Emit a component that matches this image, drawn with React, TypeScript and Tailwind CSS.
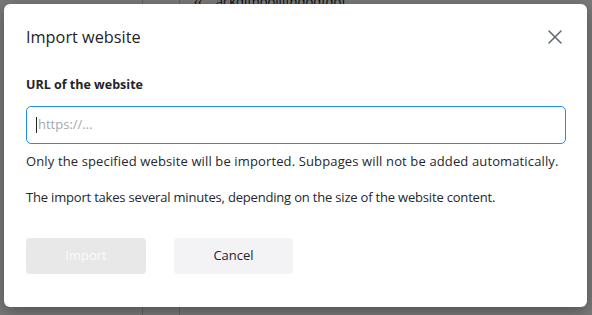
import React from "react";

export default function App() {
  return (
    <div
      className="relative w-[592px] h-[315px] overflow-hidden bg-white"
      style={{ fontFamily: '"Open Sans", "Noto Sans", sans-serif' }}
    >
      {/* background page */}
      <div className="flex h-full">
        <div className="w-[143px] border-r border-[#cfcfcf]" />
        <div className="w-[37px] border-r border-[#cfcfcf]" />
        <div className="flex-1 pl-[14px]">
          <div className="-mt-[8px] text-[13px] text-[#111] flex gap-[14px]">
            <span>‹‹</span>
            <span>ackdifhoollifhdodfdof</span>
          </div>
        </div>
      </div>
      {/* overlay */}
      <div className="absolute inset-0 bg-[rgba(0,0,0,0.52)]" />
      {/* modal */}
      <div className="absolute left-[4px] top-[4px] w-[583px] h-[303px] bg-white rounded-[6px] shadow-[0_4px_16px_rgba(0,0,0,0.35)] px-[22px] pt-[20px]">
        <div className="flex items-center justify-between h-[26px]">
          <h2 className="text-[16.3px] text-[#1f2329] leading-[26px]">Import website</h2>
          <button className="mr-[3px] text-[#5f6670]">
            <svg width="14" height="14" viewBox="0 0 14 14" fill="none" stroke="currentColor" strokeWidth="1.5" strokeLinecap="round">
              <path d="M1 1 L13 13 M13 1 L1 13" />
            </svg>
          </button>
        </div>
        <div className="mt-[26px] text-[12.5px] font-bold text-[#1f2329] leading-[18px]">URL of the website</div>
        <div className="mt-[12px] h-[38px] w-[540px] rounded-[5px] border border-[#1a8cff] flex items-center pl-[9px]">
          <span className="w-px h-[16px] bg-[#222] mr-px" />
          <span className="text-[13px] text-[#a3a8ae]">https://...</span>
        </div>
        <p className="mt-[8px] text-[13px] tracking-[0.13px] text-[#24282d] leading-[18px]">
          Only the specified website will be imported. Subpages will not be added automatically.
        </p>
        <p className="mt-[18px] text-[13px] tracking-[-0.19px] text-[#24282d] leading-[18px]">
          The import takes several minutes, depending on the size of the website content.
        </p>
        <div className="mt-[32px] flex gap-[28px]">
          <button className="w-[120px] h-[36px] rounded-[4px] bg-[#e8e8e8] text-[13px] text-[#fafafa]">Import</button>
          <button className="w-[119px] h-[36px] rounded-[4px] bg-[#f3f3f5] text-[13px] text-[#1f2329]">Cancel</button>
        </div>
      </div>
    </div>
  );
}
